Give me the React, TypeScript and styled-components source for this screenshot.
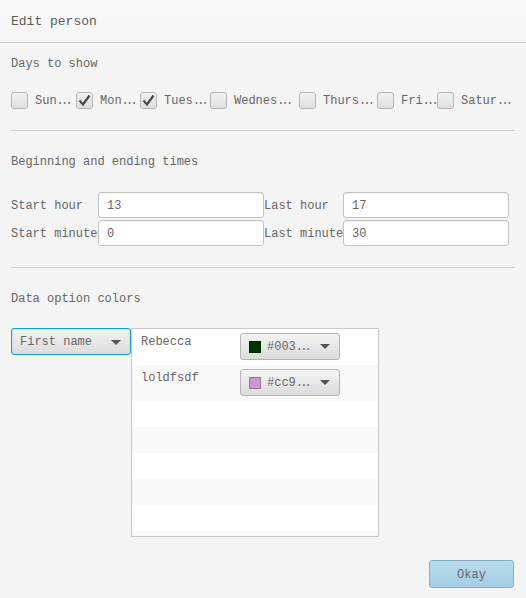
import React from "react";
import styled, { createGlobalStyle } from "styled-components";

const GlobalStyle = createGlobalStyle`
  html, body { margin: 0; padding: 0; background: #f4f4f4; }
  body {
    font-family: "Liberation Mono", "DejaVu Sans Mono", monospace;
    font-size: 12px;
    color: #666;
  }
`;

const Window = styled.div`
  width: 526px;
  height: 598px;
  display: flex;
  flex-direction: column;
  background: #f4f4f4;
  overflow: hidden;
`;

const Header = styled.div`
  height: 43px;
  box-sizing: border-box;
  flex: none;
  display: flex;
  align-items: center;
  padding: 1px 11px 0 11px;
  background: linear-gradient(#f9f9f9, #f5f5f5);
  border-bottom: 1px solid #c8c8c8;
  font-size: 13px;
  color: #5a5a5a;
`;

const Body = styled.div`
  display: flex;
  flex-direction: column;
  padding: 13px 11px 0 11px;
  flex: 1;
`;

const SectionTitle = styled.div`
  height: 16px;
  line-height: 16px;
`;

const Separator = styled.hr<{ $top: number; $bottom: number }>`
  border: none;
  border-top: 1px solid #d0d0d0;
  margin: ${(p) => p.$top}px 0 ${(p) => p.$bottom}px 0;
  width: 504px;
`;

const DaysRow = styled.div`
  display: flex;
  align-items: center;
  margin-top: 20px;
  height: 17px;
`;

const DayCell = styled.label<{ $width: number }>`
  width: ${(p) => p.$width}px;
  flex: none;
  display: flex;
  align-items: center;
  gap: 7px;
  white-space: nowrap;
`;

const Dots = styled.span`
  letter-spacing: -2.8px;
`;

const Box = styled.span`
  width: 17px;
  height: 17px;
  box-sizing: border-box;
  border: 1px solid #b4b4b4;
  border-radius: 3px;
  background: linear-gradient(#f2f2f2, #dedede);
  display: flex;
  align-items: center;
  justify-content: center;
  flex: none;
`;

const TimeGrid = styled.div`
  display: grid;
  grid-template-columns: 87px 166px 79px 166px;
  grid-auto-rows: 26px;
  row-gap: 2px;
  margin-top: 22px;
`;

const FieldLabel = styled.div`
  display: flex;
  align-items: center;
  padding-top: 1px;
  white-space: nowrap;
`;

const TextInput = styled.div`
  box-sizing: border-box;
  height: 26px;
  border: 1px solid #c2c2c2;
  border-radius: 3px;
  background: #fff;
  box-shadow: inset 0 1px 1px rgba(0, 0, 0, 0.06);
  display: flex;
  align-items: center;
  padding: 1px 0 0 8px;
  color: #666;
`;

const ColorsArea = styled.div`
  display: flex;
  align-items: flex-start;
  margin-top: 21px;
`;

const Combo = styled.div`
  box-sizing: border-box;
  width: 120px;
  height: 27px;
  border: 1px solid #14a0d8;
  border-radius: 3px;
  box-shadow: inset 0 0 0 1px #bfe3f3;
  background: linear-gradient(#f3f3f3, #dcdcdc);
  display: flex;
  align-items: center;
  justify-content: space-between;
  padding: 1px 9px 0 8px;
`;

const Arrow = styled.span`
  width: 0;
  height: 0;
  border-left: 5px solid transparent;
  border-right: 5px solid transparent;
  border-top: 5px solid #555;
`;

const Table = styled.div`
  box-sizing: border-box;
  width: 248px;
  height: 209px;
  border: 1px solid #c8c8c8;
  background: #fff;
  overflow: hidden;
  display: flex;
  flex-direction: column;
`;

const Row = styled.div<{ $odd: boolean; $height: number }>`
  height: ${(p) => p.$height}px;
  flex: none;
  display: flex;
  align-items: flex-start;
  background: ${(p) => (p.$odd ? "#f9f9f9" : "#fff")};
`;

const NameCell = styled.div`
  width: 108px;
  flex: none;
  padding: 6px 0 0 9px;
  box-sizing: border-box;
  white-space: nowrap;
`;

const Picker = styled.div`
  box-sizing: border-box;
  margin-top: 4px;
  width: 100px;
  height: 27px;
  border: 1px solid #b5b5b5;
  border-radius: 3px;
  background: linear-gradient(#f3f3f3, #dcdcdc);
  display: flex;
  align-items: center;
  padding: 0 9px 0 8px;
  gap: 6px;
`;

const Swatch = styled.span<{ $color: string }>`
  width: 12px;
  height: 12px;
  flex: none;
  box-sizing: border-box;
  border: 1px solid rgba(0, 0, 0, 0.25);
  background: ${(p) => p.$color};
`;

const PickerText = styled.span`
  flex: 1;
  padding-top: 1px;
`;

const Footer = styled.div`
  display: flex;
  justify-content: flex-end;
  margin-top: 23px;
  padding-right: 1px;
`;

const OkayButton = styled.button`
  width: 85px;
  height: 28px;
  border: 1px solid #86aec4;
  border-radius: 3px;
  background: linear-gradient(#b9dcec, #a3cde2);
  font-family: "Liberation Mono", monospace;
  font-size: 12px;
  color: #666;
  padding: 1px 0 0 0;
`;

const Check = () => (
  <svg width="15" height="15" viewBox="0 0 15 15">
    <path d="M2.5 7.5 L6 11.5 L12.5 2.5" fill="none" stroke="#4a4a4a" strokeWidth="2.2" />
  </svg>
);

const days = [
  { label: "Sun", checked: false, width: 65 },
  { label: "Mon", checked: true, width: 64 },
  { label: "Tues", checked: true, width: 70 },
  { label: "Wednes", checked: false, width: 89 },
  { label: "Thurs", checked: false, width: 78 },
  { label: "Fri", checked: false, width: 60 },
  { label: "Satur", checked: false, width: 76 },
];

const people = [
  { name: "Rebecca", color: "#003300", hex: "#003" },
  { name: "loldfsdf", color: "#cc99cc", hex: "#cc9" },
];

export default function App() {
  return (
    <Window>
      <GlobalStyle />
      <Header>Edit person</Header>
      <Body>
        <SectionTitle>Days to show</SectionTitle>
        <DaysRow>
          {days.map((d) => (
            <DayCell key={d.label} $width={d.width}>
              <Box>{d.checked && <Check />}</Box>
              <span>
                {d.label}
                <Dots>...</Dots>
              </span>
            </DayCell>
          ))}
        </DaysRow>
        <Separator $top={21} $bottom={23} />
        <SectionTitle>Beginning and ending times</SectionTitle>
        <TimeGrid>
          <FieldLabel>Start hour</FieldLabel>
          <TextInput>13</TextInput>
          <FieldLabel>Last hour</FieldLabel>
          <TextInput>17</TextInput>
          <FieldLabel>Start minute</FieldLabel>
          <TextInput>0</TextInput>
          <FieldLabel>Last minute</FieldLabel>
          <TextInput>30</TextInput>
        </TimeGrid>
        <Separator $top={21} $bottom={23} />
        <SectionTitle>Data option colors</SectionTitle>
        <ColorsArea>
          <Combo>
            First name
            <Arrow />
          </Combo>
          <Table>
            {people.map((p, i) => (
              <Row key={p.name} $odd={i % 2 === 1} $height={36}>
                <NameCell>{p.name}</NameCell>
                <Picker>
                  <Swatch $color={p.color} />
                  <PickerText>
                    {p.hex}
                    <Dots>...</Dots>
                  </PickerText>
                  <Arrow />
                </Picker>
              </Row>
            ))}
            {Array.from({ length: 6 }).map((_, i) => (
              <Row key={i} $odd={i % 2 === 1} $height={26} />
            ))}
          </Table>
        </ColorsArea>
        <Footer>
          <OkayButton>Okay</OkayButton>
        </Footer>
      </Body>
    </Window>
  );
}
